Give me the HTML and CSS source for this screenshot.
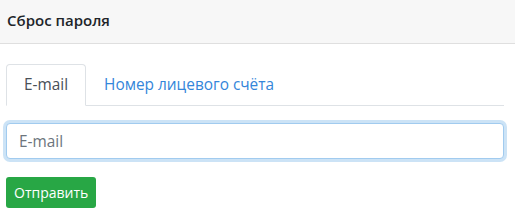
FILE: index.html
```html
<!DOCTYPE html>
<html lang="ru">

<head>
    <meta charset="UTF-8">
    <meta name="viewport" content="width=device-width, initial-scale=1.0">
    <title>Сброс пароля</title>
    <link rel="stylesheet" href="styles.css">
</head>

<body>
    <div class="card-header">Сброс пароля</div>
    <div class="card-body">
        <ul class="nav-tabs">
            <li><a href="#" class="tab active">E-mail</a></li>
            <li><a href="#" class="tab">Номер лицевого счёта</a></li>
        </ul>
        <form class="reset-form">
            <input type="email" class="form-control" placeholder="E-mail" autofocus>
            <button type="submit" class="btn-send">Отправить</button>
        </form>
    </div>
</body>

</html>
```

FILE: styles.css
```css
body {
    margin: 0;
    padding: 0;
    background-color: #FFFFFF;
    color: #212529;
    font-family: "Open Sans", "Noto Sans", sans-serif;
    font-size: 15px;
}

.card-header {
    height: 43px;
    line-height: 40px;
    padding: 0 7px;
    background-color: #F7F7F7;
    border-bottom: 1px solid #DFDFDF;
    font-size: 15px;
    font-weight: 600;
}

.card-body {
    padding: 20px 11px 0 6px;
}

.nav-tabs {
    display: flex;
    list-style: none;
    margin: 0;
    padding: 0;
    border-bottom: 1px solid #DEE2E6;
}

.tab {
    display: block;
    height: 40px;
    line-height: 40px;
    padding: 0 17px;
    margin-bottom: -1px;
    border: 1px solid transparent;
    border-radius: 4px 4px 0 0;
    color: #3486DA;
    text-decoration: none;
    font-size: 15.4px;
}

.tab.active {
    color: #495057;
    background-color: #FFFFFF;
    border-color: #DEE2E6 #DEE2E6 #FFFFFF;
}

.reset-form {
    padding-top: 17px;
}

.form-control {
    display: block;
    box-sizing: border-box;
    width: 100%;
    height: 36px;
    padding: 0 12px;
    border: 1px solid #CED4DA;
    border-radius: 4px;
    font-family: inherit;
    font-size: 15.4px;
    color: #495057;
    outline: none;
}

.form-control::placeholder {
    color: #6C757D;
}

.form-control:focus {
    border-color: #A1CBEF;
    box-shadow: 0 0 0 3px rgba(52, 144, 220, 0.25);
}

.btn-send {
    display: block;
    margin-top: 18px;
    height: 31px;
    padding: 0 8px;
    border: none;
    border-radius: 3px;
    background-color: #28A745;
    color: #FFFFFF;
    font-family: inherit;
    font-size: 14px;
    cursor: pointer;
}
```
